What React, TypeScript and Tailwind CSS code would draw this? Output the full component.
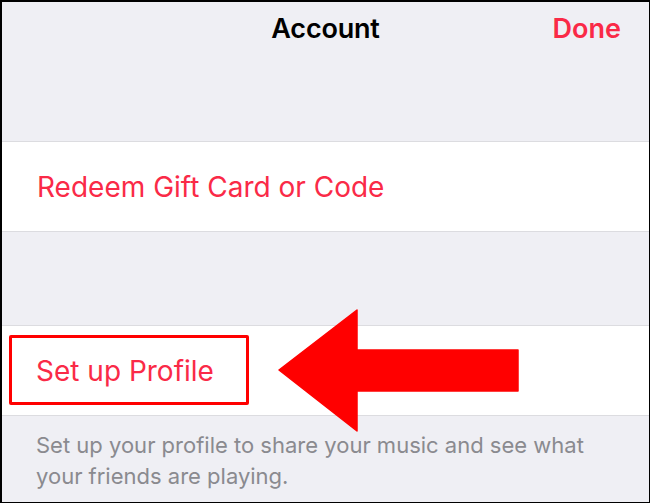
import React from 'react';

const pink = 'text-[#fa2a47]';

// Big red pointer drawn over the profile row
const Arrow: React.FC = () => (
    <svg
        className="absolute left-[276px] top-[-17px]"
        width="241"
        height="123"
        viewBox="0 0 241 123"
    >
        <polygon
            points="1,61 79,1 79,41 240,41 240,82 79,82 79,122"
            fill="#ff0000"
            stroke="#ff0000"
            strokeWidth="1.5"
            strokeLinejoin="round"
        />
    </svg>
);

const App: React.FC = () => {
    return (
        <div
            className="w-[650px] h-[503px] overflow-hidden bg-[#efeff4] border-l-2 border-t-2 border-r border-b border-black"
            style={{ fontFamily: 'Inter, "Liberation Sans", sans-serif' }}
        >
            {/* Nav bar */}
            <div className="grid grid-cols-3 items-center h-[54px]">
                <div />
                <h1 className="text-center text-[27px] font-semibold text-black tracking-[-0.2px]">Account</h1>
                <div className="flex justify-end pr-[28px]">
                    <button className={`text-[27px] font-semibold ${pink}`}>Done</button>
                </div>
            </div>

            <div className="h-[85px]" />

            {/* Redeem row */}
            <div className="h-[91px] bg-white border-y border-[#dcdce0] flex items-center pl-[35px]">
                <span className={`text-[28px] ${pink}`}>Redeem Gift Card or Code</span>
            </div>

            <div className="h-[93px]" />

            {/* Profile row */}
            <div className="relative h-[91px] bg-white border-y border-[#dcdce0] flex items-center pl-[34px]">
                <span className={`text-[28px] ${pink}`}>Set up Profile</span>
                <div className="absolute left-[7px] top-[9px] w-[240px] h-[70px] border-[3px] border-[#ff0000] rounded-[2px]" />
                <Arrow />
            </div>

            <p className="pl-[34px] pr-[44px] pt-[14px] text-[22px] leading-[31px] text-[#8a8a8f]">
                Set up your profile to share your music and see what your friends are playing.
            </p>
        </div>
    );
};

export default App;
